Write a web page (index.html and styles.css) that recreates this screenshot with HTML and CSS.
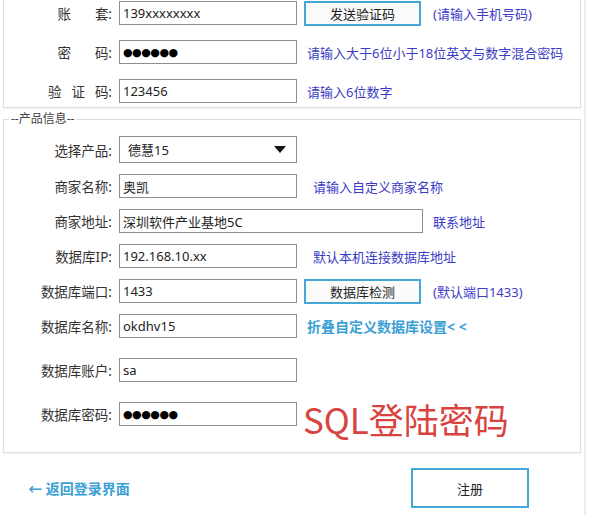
FILE: index.html
```html
<!DOCTYPE html>
<html lang="zh-CN">
<head>
    <meta charset="UTF-8">
    <meta name="viewport" content="width=device-width, initial-scale=1.0">
    <title>注册</title>
    <link rel="stylesheet" href="styles.css">
</head>
<body>
<div class="window">
    <!-- Compte -->
    <div class="group account">
        <div class="row">
            <label class="lbl"><span class="wide">账</span>套:</label>
            <input class="field" type="text" value="139xxxxxxxx" readonly>
            <button class="btn">发送验证码</button>
            <span class="hint after-btn">(请输入手机号码)</span>
        </div>
        <div class="row gap">
            <label class="lbl"><span class="wide">密</span>码:</label>
            <input class="field pwd" type="text" value="●●●●●●" readonly>
            <span class="hint">请输入大于6位小于18位英文与数字混合密码</span>
        </div>
        <div class="row gap">
            <label class="lbl"><span class="mid">验</span><span class="mid">证</span>码:</label>
            <input class="field" type="text" value="123456" readonly>
            <span class="hint">请输入6位数字</span>
        </div>
    </div>

    <!-- Produit -->
    <fieldset class="group product">
        <legend>--产品信息--</legend>
        <div class="row tall">
            <label class="lbl">选择产品:</label>
            <div class="select">
                <span>德慧15</span>
                <svg width="12" height="7" viewBox="0 0 12 7"><path d="M0 0h12L6 7z" fill="#111"/></svg>
            </div>
        </div>
        <div class="row next">
            <label class="lbl">商家名称:</label>
            <input class="field" type="text" value="奥凯" readonly>
            <span class="hint far">请输入自定义商家名称</span>
        </div>
        <div class="row next">
            <label class="lbl">商家地址:</label>
            <input class="field wide-field" type="text" value="深圳软件产业基地5C" readonly>
            <span class="hint">联系地址</span>
        </div>
        <div class="row next">
            <label class="lbl">数据库IP:</label>
            <input class="field" type="text" value="192.168.10.xx" readonly>
            <span class="hint far">默认本机连接数据库地址</span>
        </div>
        <div class="row next">
            <label class="lbl">数据库端口:</label>
            <input class="field" type="text" value="1433" readonly>
            <button class="btn">数据库检测</button>
            <span class="hint after-btn">(默认端口1433)</span>
        </div>
        <div class="row next">
            <label class="lbl">数据库名称:</label>
            <input class="field" type="text" value="okdhv15" readonly>
            <a class="fold" href="#">折叠自定义数据库设置&lt; &lt;</a>
        </div>
        <div class="row loose">
            <label class="lbl">数据库账户:</label>
            <input class="field" type="text" value="sa" readonly>
        </div>
        <div class="row loose">
            <label class="lbl">数据库密码:</label>
            <input class="field pwd" type="text" value="●●●●●●" readonly>
            <span class="note">SQL登陆密码</span>
        </div>
    </fieldset>

    <div class="footer">
        <a class="back" href="#">← 返回登录界面</a>
        <button class="btn big">注册</button>
    </div>
</div>
</body>
</html>
```

FILE: styles.css
```css
body {
    margin: 0;
    background: #fff;
    font-family: "Noto Sans", "Noto Sans CJK SC", sans-serif;
    color: #333;
    overflow: hidden;
}

.window {
    width: 584px;
    height: 527px;
    border-right: 2px solid #ececec;
}

/* Cadres */
.group {
    box-sizing: border-box;
    width: 578px;
    margin: 0 0 0 3px;
    border: 1px solid #dedede;
    box-shadow: 0 1px 2px rgba(0, 0, 0, 0.06);
}
.account {
    margin-top: -12px;
    padding: 12px 0 4px 0;
}
.product {
    margin-top: 3px;
    padding: 9px 0 26px 0;
    min-width: 0;
}
.product legend {
    margin-left: 5px;
    padding: 0 2px;
    font-size: 12px;
    line-height: 16px;
    color: #444;
}

/* Lignes */
.row {
    display: flex;
    align-items: center;
    height: 24px;
}
.row.gap { margin-top: 15px; }
.row.tall { height: 27px; }
.row.next { margin-top: 11px; }
.row.loose { margin-top: 20px; }

.lbl {
    width: 108px;
    margin-right: 7px;
    text-align: right;
    font-size: 13.5px;
    color: #333;
    white-space: nowrap;
}
.lbl .wide { margin-right: 24px; }
.lbl .mid { margin-right: 10px; }

/* Champs */
.field {
    box-sizing: border-box;
    width: 178px;
    height: 24px;
    margin: 0;
    padding: 0 3px;
    border: 1px solid #8e8e8e;
    background: #fff;
    font-family: "Noto Sans", "Noto Sans CJK SC", sans-serif;
    font-size: 13px;
    color: #222;
    outline: none;
}
.field.wide-field { width: 304px; }
.field.pwd {
    font-family: "DejaVu Sans", sans-serif;
    font-size: 11px;
    letter-spacing: -0.5px;
    color: #000;
}

.select {
    box-sizing: border-box;
    width: 178px;
    height: 27px;
    padding: 0 10px 0 8px;
    border: 1px solid #8e8e8e;
    display: flex;
    align-items: center;
    justify-content: space-between;
    font-size: 13px;
    color: #222;
}

.btn {
    box-sizing: border-box;
    width: 117px;
    height: 25px;
    margin-left: 7px;
    border: 2px solid #44a7d6;
    background: #fbfbfb;
    font-family: "Noto Sans", "Noto Sans CJK SC", sans-serif;
    font-size: 13px;
    color: #222;
    padding: 0;
}
.btn.big {
    width: 118px;
    height: 40px;
    margin-left: auto;
    background: #fff;
}

/* Textes d'aide */
.hint {
    margin-left: 10px;
    font-size: 13px;
    color: #3b3bc6;
    white-space: nowrap;
}
.hint.far { margin-left: 16px; }
.hint.after-btn { margin-left: 12px; }

.fold {
    margin-left: 10px;
    font-size: 14px;
    font-weight: bold;
    color: #3ba0d6;
    text-decoration: none;
}

.note {
    margin: 10px 0 0 6px;
    font-family: "Noto Sans CJK SC", sans-serif;
    font-size: 35px;
    line-height: 24px;
    color: #d9433f;
    white-space: nowrap;
}

/* Bas de page */
.footer {
    display: flex;
    align-items: center;
    margin-top: 15px;
    padding: 0 55px 0 28px;
}
.back {
    font-size: 14px;
    font-weight: bold;
    color: #3ba0d6;
    text-decoration: none;
}
```
